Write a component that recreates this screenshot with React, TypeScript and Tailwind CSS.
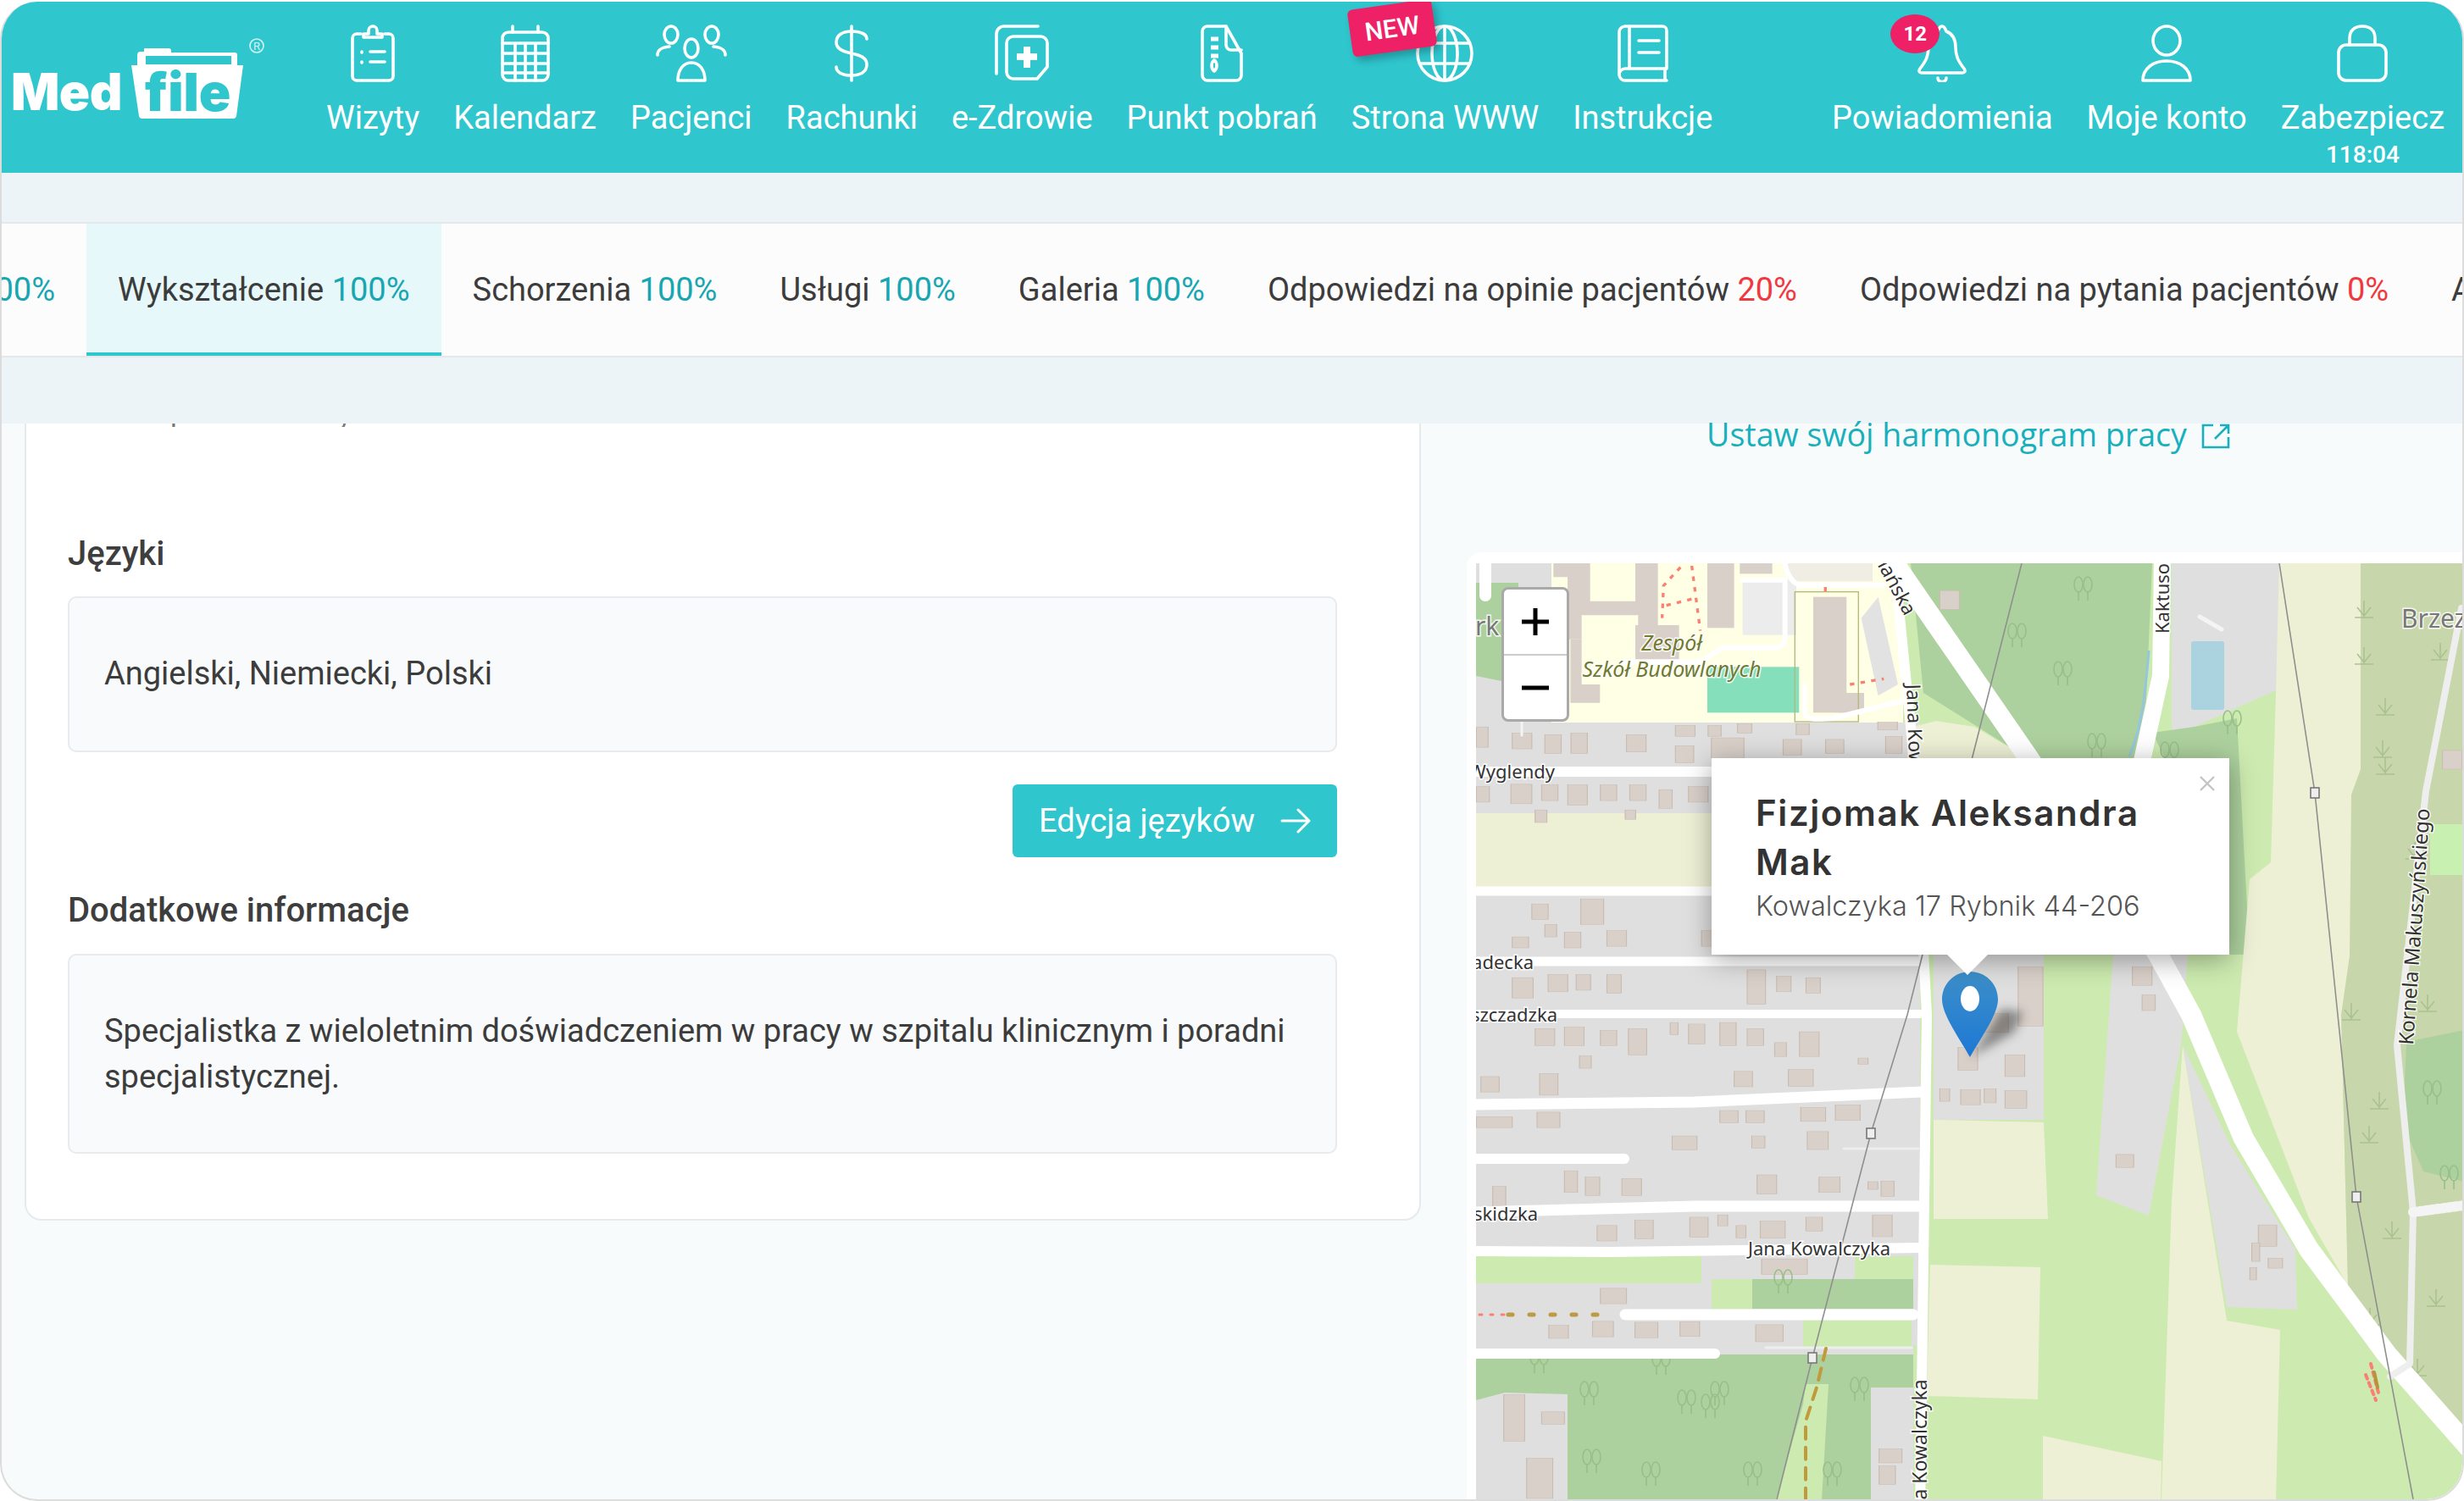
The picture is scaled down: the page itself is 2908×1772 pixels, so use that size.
import { ReactNode } from 'react';

const stroke = { fill: 'none', stroke: '#fff', strokeWidth: 3.6, strokeLinecap: 'round', strokeLinejoin: 'round' } as const;

const Icon = ({ w, children }: { w: number; children: ReactNode }) => (
  <svg width={w} height={68} viewBox={`0 0 ${w} 68`} {...stroke}>
    {children}
  </svg>
);

const navLeft: { label: string; icon: ReactNode; badge?: boolean }[] = [
  {
    label: 'Wizyty',
    icon: (
      <Icon w={52}>
        <path d="M12 11H7a5 5 0 0 0-5 5v45a5 5 0 0 0 5 5h38a5 5 0 0 0 5-5V16a5 5 0 0 0-5-5h-5" />
        <path d="M15 15h22v-4h-6V7a5 5 0 0 0-10 0v4h-6z" />
        <path d="M13 32v1M13 44v1M23 32h17M23 44h17" />
      </Icon>
    ),
  },
  {
    label: 'Kalendarz',
    icon: (
      <Icon w={58}>
        <rect x="2" y="9" width="54" height="57" rx="7" />
        <path d="M14 2v7M44 2v7M2 22h54M2 34h54M2 46h54M2 57h54M17 22v44M29 22v44M41 22v44" />
      </Icon>
    ),
  },
  {
    label: 'Pacjenci',
    icon: (
      <Icon w={84}>
        <ellipse cx="18" cy="12" rx="8" ry="10" />
        <ellipse cx="66" cy="12" rx="8" ry="10" />
        <ellipse cx="42" cy="28" rx="8" ry="11" />
        <path d="M2 36c0-6 4-9 14-10M82 36c0-6-4-9-14-10" />
        <path d="M26 66c0-12 6-21 16-21s16 9 16 21z" />
      </Icon>
    ),
  },
  {
    label: 'Rachunki',
    icon: (
      <Icon w={44}>
        <path d="M22 2v64" />
        <path d="M40 17c0-6-8-9-18-9S4 12 4 21c0 8 8 11 18 13s18 5 18 13c0 9-8 13-18 13S4 57 4 50" />
      </Icon>
    ),
  },
  {
    label: 'e-Zdrowie',
    icon: (
      <Icon w={64}>
        <path d="M2 58V11a9 9 0 0 1 9-9h40" />
        <path d="M22 14h32a8 8 0 0 1 8 8v28l-12 14H22a8 8 0 0 1-8-8V22a8 8 0 0 1 8-8z" />
        <path d="M38 26v25M26 38h24" strokeWidth="8" strokeLinecap="butt" />
      </Icon>
    ),
  },
  {
    label: 'Punkt pobrań',
    icon: (
      <Icon w={50}>
        <path d="M8 2h22l18 32v26a6 6 0 0 1-6 6H8a6 6 0 0 1-6-6V8a6 6 0 0 1 6-6z" />
        <path d="M30 2v22a6 6 0 0 0 6 6h12" />
        <path d="M12 17h9M12 27h9M12 37h9" strokeWidth="5" strokeLinecap="butt" />
        <path d="M16 42c-4 3-4 10 0 13 4-3 4-10 0-13z" />
      </Icon>
    ),
  },
  {
    label: 'Strona WWW',
    badge: true,
    icon: (
      <Icon w={68}>
        <circle cx="34" cy="34" r="32" />
        <ellipse cx="34" cy="34" rx="15" ry="32" />
        <path d="M34 2v64M5 22h58M5 46h58" />
      </Icon>
    ),
  },
  {
    label: 'Instrukcje',
    icon: (
      <Icon w={60}>
        <path d="M9 2h44a5 5 0 0 1 5 5v45H9a7 7 0 0 0-7 7V9a7 7 0 0 1 7-7z" />
        <path d="M2 59a7 7 0 0 0 7 7h49M56 52v14M14 2v50M25 19h24M25 33h24" />
      </Icon>
    ),
  },
];

const Logo = () => (
  <svg width={330} height={150} viewBox="0 0 330 150" className="shrink-0">
    <text x="13" y="128" fill="#fff" fontFamily="Inter, sans-serif" fontWeight="900" fontSize="60" letterSpacing="-0.5">
      Med
    </text>
    <path d="M162 75v-12a4 4 0 0 1 4-4h4v-3a1 1 0 0 1 1-1h28a3 3 0 0 1 3 3v2h75a3 3 0 0 1 3 3v12z" fill="#fff" />
    <rect x="172" y="64" width="101" height="10" fill="#2fc6ce" />
    <path d="M155 75h132l-8 60a4 4 0 0 1-4 3H168a4 4 0 0 1-4-3z" fill="#fff" />
    <text x="171" y="129" fill="#2fc6ce" fontFamily="Inter, sans-serif" fontWeight="900" fontSize="62" letterSpacing="0">
      file
    </text>
    <circle cx="303" cy="52" r="8" fill="none" stroke="#d4f3f5" strokeWidth="1.6" />
    <text x="303" y="57" fill="#d4f3f5" textAnchor="middle" fontFamily="Roboto, sans-serif" fontSize="13">
      R
    </text>
  </svg>
);

const NavItem = ({ label, icon, badge, children }: { label: string; icon: ReactNode; badge?: boolean; children?: ReactNode }) => (
  <div className="relative flex flex-col items-center shrink-0">
    <div className="relative h-[68px] flex justify-center">
      {icon}
      {badge && (
        <div className="absolute left-[-78px] top-[-24px] w-[100px] h-[56px] -rotate-[8deg] rounded-[6px] bg-[#ee2066] text-white text-[30px] font-medium flex items-center justify-center shadow-[4px_6px_10px_rgba(0,0,0,0.25)]">
          NEW
        </div>
      )}
    </div>
    <span className="mt-[19px] text-[38px] leading-[46px] text-white whitespace-nowrap">{label}</span>
    {children}
  </div>
);

const Header = () => (
  <div className="h-[202px] shrink-0 bg-[#2fc6ce] flex items-start pt-[27px] text-white">
    <div className="w-[385px] shrink-0 -mt-[27px] -ml-[2px]">
      <Logo />
    </div>
    <div className="flex gap-[40px]">
      {navLeft.map((n) => (
        <NavItem key={n.label} {...n} />
      ))}
    </div>
    <div className="ml-auto flex gap-[40px] pr-[21px]">
      <NavItem
        label="Powiadomienia"
        icon={
          <div className="relative">
            <Icon w={58}>
              <path d="M29 2c2 0 4 3 5 6 8 3 11 11 11 19 0 10 3 16 10 25 2 3 1 5-2 5H5c-3 0-4-2-2-5 7-9 10-15 10-25 0-8 3-16 11-19 1-3 3-6 5-6z" />
              <path d="M24 63c0 6 10 6 10 0" />
            </Icon>
            <div className="absolute left-[-32px] top-[-12px] w-[58px] h-[46px] rounded-[50%] bg-[#ee2066] text-[24px] font-bold flex items-center justify-center">12</div>
          </div>
        }
      />
      <NavItem
        label="Moje konto"
        icon={
          <Icon w={60}>
            <ellipse cx="30" cy="19" rx="16" ry="17" />
            <path d="M2 66c0-14 12-23 28-23s28 9 28 23z" />
          </Icon>
        }
      />
      <NavItem
        label="Zabezpiecz"
        icon={
          <Icon w={60}>
            <rect x="2" y="24" width="56" height="42" rx="9" />
            <path d="M15 24V16C15 7 21 2 30 2s15 5 15 14v8" />
          </Icon>
        }
      >
        <span className="mt-[5px] text-[28px] leading-[32px] font-medium">118:04</span>
      </NavItem>
    </div>
  </div>
);

const tabs: [string, string, boolean][] = [
  ['Wykształcenie', '100%', true],
  ['Schorzenia', '100%', true],
  ['Usługi', '100%', true],
  ['Galeria', '100%', true],
  ['Odpowiedzi na opinie pacjentów', '20%', false],
  ['Odpowiedzi na pytania pacjentów', '0%', false],
];

const Tabs = () => (
  <div className="h-[160px] shrink-0 border-y-2 border-[#e4e8ea] bg-[#fcfcfc] flex overflow-hidden text-[38px] leading-[46px] text-[#3c3c3c] whitespace-nowrap">
    <div className="w-[100px] shrink-0 flex justify-end pr-[37px] pt-[55px]">
      <span className="text-[#17a6b2]">100%</span>
    </div>
    {tabs.map(([name, pct, ok], i) => (
      <div
        key={name}
        className={
          i === 0
            ? 'shrink-0 px-[37px] pt-[55px] bg-[#e6f8f9] border-b-4 border-[#2fc6ce]'
            : 'shrink-0 px-[37px] pt-[55px]'
        }
      >
        {name} <span className={ok ? 'text-[#17a6b2]' : 'text-[#f0393f]'}>{pct}</span>
      </div>
    ))}
    <div className="shrink-0 pl-[37px] pt-[55px]">Akceptacja</div>
  </div>
);

const LeftCard = () => (
  <div className="ml-[27px] w-[1648px] h-[941px] shrink-0 bg-white border-2 border-t-0 border-[#e6eaec] rounded-b-[20px] pl-[49px] pr-[97px] overflow-hidden">
    <div className="h-[4px] overflow-hidden pl-[46px] relative">
      <div className="absolute top-[-28px] text-[34px] leading-[32px] text-[#777]">Akceptowane karty</div>
    </div>
    <div className="mt-[127px] text-[40px] leading-[46px] font-medium text-[#3e3e3e]">Języki</div>
    <div className="mt-[27px] h-[184px] rounded-[10px] border-2 border-[#e8ebee] bg-[#f9fafb] flex items-center px-[41px] pb-[2px] text-[38px] text-[#3c3c3c]">
      Angielski, Niemiecki, Polski
    </div>
    <div className="mt-[38px] flex justify-end">
      <div className="w-[383px] h-[86px] rounded-[6px] bg-[#2fc6ce] text-white text-[38px] flex items-center justify-center gap-[30px]">
        <span>Edycja języków</span>
        <svg width="36" height="30" viewBox="0 0 36 30" fill="none" stroke="#fff" strokeWidth="3" strokeLinecap="round" strokeLinejoin="round">
          <path d="M2 15h32M21 2l13 13-13 13" />
        </svg>
      </div>
    </div>
    <div className="mt-[40px] text-[40px] leading-[46px] font-medium text-[#3e3e3e]">Dodatkowe informacje</div>
    <div className="mt-[28px] h-[236px] rounded-[10px] border-2 border-[#e8ebee] bg-[#f9fafb] flex items-center px-[41px] text-[38px] leading-[54px] text-[#3c3c3c]">
      Specjalistka z wieloletnim doświadczeniem w pracy w szpitalu klinicznym i poradni specjalistycznej.
    </div>
  </div>
);

// Map shapes are written in the coordinates of the reference crops, each group maps back to page px
const g5 = 'translate(1700 640) scale(0.7704 0.37)';
const g6 = 'translate(1700 1200) scale(0.7704 0.3648)';
const g10 = 'translate(1740 660) scale(0.3333)';

const b5 = [
  [360,590,30,35],[410,590,20,35],[455,585,22,30],[545,585,20,35],[670,580,30,25],
  [55,595,18,65],[110,615,30,50],[160,620,25,60],[200,615,25,65],[285,620,30,55],[360,655,28,55],[415,630,50,65],[525,635,28,50],[590,635,28,45],[682,625,25,55],
  [55,785,20,50],[108,778,32,62],[155,780,25,50],[195,780,30,65],[245,780,25,50],[290,780,25,50],[335,795,20,60],[380,785,30,50],[145,860,18,40],[283,860,16,30],
  [140,1160,25,50],[215,1145,35,80],[160,1225,18,40],[190,1250,25,50],[255,1245,30,50],[110,1265,25,35],[400,1245,18,50],
  [110,1395,32,65],[165,1385,30,55],[208,1385,22,50],[255,1385,22,60],[470,1370,28,110],[515,1390,22,50],[560,1395,22,50],
  [885,1360,38,190],[825,1510,45,60],[1060,1360,30,60],[1075,1450,20,50],[765,160,30,60],[1535,670,30,60],
];
const b6 = [
  [145,45,30,55],[190,40,30,60],[245,50,25,50],[288,45,28,85],[352,25,12,40],[380,30,25,65],[428,25,25,75],[470,45,25,55],[512,90,18,45],[550,55,30,80],[213,133,18,40],[640,140,15,20],[62,200,28,50],[152,190,28,70],[450,183,28,50],[533,177,38,55],
  [55,330,55,35],[148,315,35,50],[428,310,28,40],[468,310,28,40],[552,300,38,45],[605,292,38,50],[355,392,38,45],[477,392,20,40],[562,378,32,58],[190,505,20,70],[222,525,22,60],[278,530,30,55],[485,518,30,62],[580,525,32,50],[655,540,15,25],[675,538,20,50],[80,555,20,65],
  [240,682,30,50],[298,665,28,60],[382,655,28,65],[425,648,15,35],[453,682,15,40],[490,668,38,55],[560,655,25,45],[662,648,30,70],
  [492,790,70,50],[245,885,40,50],[166,1005,30,42],[233,992,32,50],[298,995,35,50],[367,993,30,48],[483,1003,42,55],
  [765,240,15,40],[797,243,30,48],[833,240,18,45],[865,245,33,58],[793,105,30,75],[865,130,30,70],[1035,452,27,42],[1253,680,28,70],[1243,738,12,60],[1268,788,22,32],[1240,818,10,40],
  [97,1230,32,150],[155,1285,35,40],[132,1435,40,130],[672,1405,35,45],[672,1460,25,60],
];
const trees = [
  [2458,700],[2434,800],[2474,885],[2380,755],[2634,858],[2560,895],[2104,1518],[2018,1665],[2029,1650],[1875,1650],[1990,1660],
  [1948,1745],[1878,1730],[2068,1745],[2162,1745],[2194,1645],[2870,1295],[2890,1395],[1816,1612],[1960,1614],
];
const marks = [
  [2790,725],[2880,775],[2790,780],[2815,840],[2812,890],[2815,910],[2775,1200],[2850,1010],[2808,1305],[2796,1345],[2823,1458],[2875,1538],[2797,1560],[2853,1620],[2865,1190],
];

const Road = ({ d, w = 12, c = '#fff', dash }: { d: string; w?: number; c?: string; dash?: string }) => (
  <path d={d} fill="none" stroke={c} strokeWidth={w} strokeLinecap="round" strokeLinejoin="round" strokeDasharray={dash} />
);

const Label = ({ x, y, rot, size = 22, c = '#333', anchor = 'start', italic, children }: { x: number; y: number; rot?: number; size?: number; c?: string; anchor?: 'start' | 'middle' | 'end'; italic?: boolean; children: string }) => (
  <text
    x={x}
    y={y}
    transform={rot ? `rotate(${rot} ${x} ${y})` : undefined}
    fontFamily="'Noto Sans', sans-serif"
    fontStyle={italic ? 'italic' : 'normal'}
    fontSize={size}
    fill={c}
    textAnchor={anchor}
    stroke="#fff"
    strokeOpacity={0.85}
    strokeWidth={3}
    paintOrder="stroke"
  >
    {children}
  </text>
);

const MapDrawing = () => (
  <svg viewBox="1742 667 1166 1105" width="1166" height="1105" className="block">
    <rect x="1742" y="667" width="1166" height="1105" fill="#cdebb0" />
    {/* land use, page px */}
    <rect x="1742" y="667" width="90" height="190" fill="#e0dfdf" />
    <path d="M1742 690h50v120l-50-10z" fill="#add19e" />
    <rect x="1742" y="855" width="524" height="746" fill="#e0dfdf" />
    <rect x="1831" y="667" width="415" height="188" fill="#ffffe5" />
    <rect x="1742" y="962" width="290" height="92" fill="#eef0d5" />
    <path d="M2255 667L2540 667 2530 897 2393 897 2270 820z" fill="#add19e" />
    <path d="M2258 860L2285 853 2330 860 2393 897 2266 897z" fill="#eef0d5" />
    <path d="M2563 667H2690V815L2590 860 2563 870z" fill="#e0dfdf" />
    <rect x="2586" y="759" width="39" height="81" rx="3" fill="#aad3df" />
    <path d="M2540 867L2590 860 2640 850 2655 1129 2600 1129 2555 897z" fill="#add19e" />
    <path d="M2690 667H2786V1130L2763 1200 2771 1520 2725 1440 2640 1220 2655 1040 2680 1020 2686 820z" fill="#eef0d5" />
    <path d="M2786 667H2908V1715L2800 1590 2771 1520 2763 1200 2773 1130 2775 940 2786 910z" fill="#c8d7ab" />
    <path d="M2775 667H2786V910L2775 915z" fill="#eef0d5" />
    <path d="M2840 1232L2908 1218V1397L2860 1385 2836 1330z" fill="#add19e" />
    <rect x="2868" y="975" width="40" height="60" fill="#c8f0b0" />
    <rect x="2282" y="1129" width="130" height="195" fill="#e0dfdf" />
    <path d="M2282 1324L2412 1327 2417 1441H2282z" fill="#eef0d5" />
    <path d="M2278 1495L2408 1498 2405 1654 2274 1650z" fill="#eef0d5" />
    <path d="M2411 1697L2551 1727 2550 1772H2411z" fill="#eef0d5" />
    <path d="M2576 1236L2628 1561 2691 1572 2686 1772H2551L2563 1419z" fill="#eef0d5" />
    <path d="M2494 1129H2582L2574 1236 2536 1437 2474 1413z" fill="#e0dfdf" />
    <path d="M2576 1236L2632 1353 2709 1477 2711 1548 2628 1545z" fill="#e0dfdf" />
    <rect x="1742" y="1485" width="266" height="32" fill="#cdebb0" />
    <rect x="2189" y="1485" width="69" height="28" fill="#cdebb0" />
    <rect x="2020" y="1512" width="48" height="35" fill="#cdebb0" />
    <rect x="2068" y="1512" width="190" height="35" fill="#add19e" />
    <rect x="2128" y="1561" width="128" height="33" fill="#cdebb0" />
    <path d="M1742 1601H2258V1772H1742z" fill="#add19e" />
    <path d="M2128 1660L2131 1636H2158L2150 1772H2096z" fill="#cdebb0" />
    <path d="M1742 1655L1776 1646 1850 1648V1772H1742z" fill="#e0dfdf" />
    <rect x="2208" y="1640" width="50" height="132" fill="#e0dfdf" />
    <rect x="2258" y="1590" width="10" height="182" fill="#cdebb0" />

    {/* school buildings */}
    <g transform={g10}>
      <path d="M280 20H410V155H570V20H650V240H725V365H570V240H580V205H380V290H330V70H280z" fill="#d9d0c9" />
      <path d="M380 450H445V515H340V290H380z" fill="#d9d0c9" />
      <rect x="825" y="20" width="95" height="230" fill="#d9d0c9" />
      <rect x="940" y="20" width="115" height="38" fill="#d9d0c9" />
      <rect x="1200" y="140" width="118" height="410" fill="#d9d0c9" />
      <rect x="1290" y="480" width="90" height="70" fill="#d9d0c9" />
      <rect x="825" y="388" width="325" height="162" fill="#86dfbb" />
      <rect x="950" y="80" width="190" height="195" fill="#ececec" />
      <path d="M1370 215L1430 140 1500 450 1430 490z" fill="#e2e2e2" />
      <rect x="1110" y="20" width="300" height="65" fill="#f0ede4" />
      <rect x="1135" y="122" width="225" height="460" fill="none" stroke="#b5b77d" strokeWidth="4" />
      <path d="M1100 20c5 40 30 78 60 78h290M950 80h150v200c0 30-20 40-40 40H880l-80 50H520M1170 455v90c0 30 30 30 100 25l240-60" fill="none" stroke="#fff" strokeWidth="18" strokeLinecap="round" />
      <path d="M730 35L670 100 665 215M770 30L800 260M680 170L780 145M1330 450L1450 430M1243 105V125" fill="none" stroke="#f98072" strokeWidth="10" strokeDasharray="16 22" />
    </g>
    <g transform={g5}>
      {b5.map(([x, y, w, h], i) => (
        <rect key={i} x={x} y={y} width={w} height={h} fill="#d9d0c9" stroke="#c9bcb1" strokeWidth="1.5" />
      ))}
    </g>
    <g transform={g6}>
      {b6.map(([x, y, w, h], i) => (
        <rect key={i} x={x} y={y} width={w} height={h} fill="#d9d0c9" stroke="#c9bcb1" strokeWidth="1.5" />
      ))}
    </g>

    {/* trees, scrub */}
    {trees.map(([x, y], i) => (
      <g key={i} fill="none" stroke="#98bf88" strokeWidth="1.6">
        <ellipse cx={x - 5} cy={y - 8} rx="5" ry="9" />
        <ellipse cx={x + 6} cy={y - 8} rx="5" ry="9" />
        <path d={`M${x - 5} ${y}v11M${x + 6} ${y}v11`} />
      </g>
    ))}
    {marks.map(([x, y], i) => (
      <path key={i} d={`M${x} ${y - 14}v20M${x - 8} ${y - 6}l8 10 8-10M${x - 11} ${y + 6}h22`} fill="none" stroke="#aac28f" strokeWidth="1.6" />
    ))}

    {/* roads */}
    <Road d="M2224 650L2393 895 2547 1129 2586 1200 2648 1346 2725 1477 2817 1601 2915 1712" w={24} />
    <Road d="M2552 660L2550 800 2528 900" w={20} />
    <path d="M2536 770C2532 820 2528 860 2513 895" fill="none" stroke="#94c6dc" strokeWidth="3" />
    <Road d="M2238 690L2257 880 2274 1200 2266 1790" w={12} />
    <Road d="M1742 913H2030" />
    <Road d="M1742 1054H2030" w={11} />
    <Road d="M1742 1137H2268" w={11} />
    <Road d="M1742 1199H2268" w={10} />
    <Road d="M1742 1306L2000 1303 2268 1291" w={13} />
    <Road d="M1742 1370H1917" w={12} />
    <Road d="M1742 1433L2000 1426 2268 1426" w={13} />
    <Road d="M1742 1479L1900 1480 2268 1475" w={12} />
    <Road d="M1918 1554H2258" w={13} />
    <Road d="M1742 1600H2024" w={12} />
    <Road d="M2084 1593H2256" w={3} c="#eee" />
    <Road d="M2176 1358H2264" w={3} c="#eee" />
    <Road d="M1796 750V870" w={3} c="#f4f4f4" />
    <Road d="M1753 667V705" w={14} />
    <Road d="M2596 730L2622 745" w={5} c="#f4f4f4" />
    <Road d="M2905 720L2863 936 2829 1236 2848 1433 2844 1612 2821 1627" w={8} c="#eeeeee" />
    <Road d="M2848 1433L2908 1425" w={12} c="#f4f4f4" dash="3 4" />
    <Road d="M1780 1554H1900" w={5} c="#bd9a45" dash="5 20" />
    <Road d="M1746 1554H1780" w={3} c="#f98072" dash="3 10" />
    <Road d="M2155 1594L2144 1640 2131 1680V1772" w={4} c="#c09a3c" dash="14 10" />
    <Road d="M2798 1612L2808 1650M2792 1625L2804 1655" w={4} c="#f98072" dash="5 5" />
    <Road d="M2802 1622L2806 1640" w={4} c="#b8923c" />

    {/* power lines */}
    <path d="M2386 667L2328 895 2251 1200 2208 1340 2139 1605 2097 1772" fill="none" stroke="#8f8f8f" strokeWidth="1.6" />
    <path d="M2690 667L2732 938 2759 1200 2781 1415 2848 1772" fill="none" stroke="#8f8f8f" strokeWidth="1.6" />
    {[[2208, 1340], [2139, 1605], [2732, 938], [2781, 1415]].map(([x, y]) => (
      <rect key={x} x={x - 5} y={y - 6} width="10" height="12" fill="#eee" stroke="#777" strokeWidth="1.6" />
    ))}

    {/* labels */}
    <Label x={1973} y={770} anchor="middle" size={25} c="#707a30" italic>Zespół</Label>
    <Label x={1973} y={801} anchor="middle" size={25} c="#707a30" italic>Szkół Budowlanych</Label>
    <Label x={1835} y={921} anchor="end">Wyglendy</Label>
    <Label x={1810} y={1146} anchor="end">Radecka</Label>
    <Label x={1838} y={1208} anchor="end">Bieszczadzka</Label>
    <Label x={1815} y={1443} anchor="end">Beskidzka</Label>
    <Label x={2063} y={1484} size={22}>Jana Kowalczyka</Label>
    <Label x={2274} y={1806} rot={-90} size={23}>Jana Kowalczyka</Label>
    <Label x={2250} y={810} rot={88} size={23}>Jana Kowalczyka</Label>
    <Label x={2560} y={750} rot={-90} size={22}>Kaktusowa</Label>
    <Label x={2178} y={598} rot={62} size={23}>Krakowiańska</Label>
    <Label x={2848} y={1236} rot={-86} size={24}>Kornela Makuszyńskiego</Label>
    <Label x={2834} y={743} size={30} c="#777">Brzezie</Label>
    <Label x={1706} y={752} size={30} c="#777">Park</Label>
  </svg>
);

const Pin = () => (
  <svg width="110" height="112" viewBox="0 0 110 112" className="absolute left-[561px] top-[495px]">
    <defs>
      <linearGradient id="pin" x1="0" y1="0" x2="0" y2="1">
        <stop offset="0" stopColor="#3d8fc9" />
        <stop offset="1" stopColor="#1d78d4" />
      </linearGradient>
      <filter id="pinShadow" x="-50%" y="-50%" width="200%" height="200%">
        <feGaussianBlur stdDeviation="6" />
      </filter>
    </defs>
    <path d="M34 101L85 72 96 48 70 44z" fill="#333" opacity="0.5" filter="url(#pinShadow)" />
    <path d="M33 0C15 0 0 14 0 33c0 18 22 48 33 68 11-20 33-50 33-68C66 14 51 0 33 0z" fill="url(#pin)" />
    <ellipse cx="33" cy="32" rx="11" ry="15" fill="#fff" />
  </svg>
);

const MapCard = () => (
  <div className="relative flex-1 bg-white rounded-tl-[18px] pl-[11px] pt-[13px] overflow-hidden">
    <MapDrawing />
    <div className="absolute left-[41px] top-[41px] w-[80px] h-[159px] rounded-[8px] border-[3px] border-[#a9a9a9] bg-white flex flex-col text-black">
      <div className="h-[78px] border-b-2 border-[#ccc] flex items-center justify-center">
        <svg width="36" height="36" viewBox="0 0 36 36"><path d="M18 2v32M2 18h32" stroke="#000" strokeWidth="5" /></svg>
      </div>
      <div className="flex-1 flex items-center justify-center">
        <svg width="36" height="6" viewBox="0 0 36 6"><path d="M2 3h32" stroke="#000" strokeWidth="5" /></svg>
      </div>
    </div>
    <Pin />
    <div className="absolute left-[289px] top-[243px] w-[611px] h-[232px] bg-white pl-[52px] pt-[36px] shadow-[0_6px_30px_rgba(0,0,0,0.35)]">
      <div className="text-[42px] leading-[58px] font-semibold text-[#333] tracking-[1.6px] font-['Inter',sans-serif]">
        Fizjomak Aleksandra<br />Mak
      </div>
      <div className="mt-[3px] text-[32.5px] leading-[40px] font-light text-[#555] font-['Inter',sans-serif]">Kowalczyka 17 Rybnik 44-206</div>
      <svg width="20" height="20" viewBox="0 0 20 20" className="absolute right-[16px] top-[20px]">
        <path d="M2 2l16 16M18 2L2 18" stroke="#c4c4c4" strokeWidth="2.4" />
      </svg>
      <div className="absolute left-[278px] top-[232px] w-0 h-0 border-x-[24px] border-x-transparent border-t-[24px] border-t-white" />
    </div>
  </div>
);

export default function App() {
  return (
    <div className="w-[2908px] h-[1772px] bg-white overflow-hidden font-['Roboto',sans-serif]">
      <div className="h-[1770px] mt-[2px] rounded-[44px] border-x-2 border-b-2 border-[#dcdcdc] overflow-hidden bg-[#f8fbfc] flex flex-col">
        <Header />
        <div className="h-[58px] shrink-0 bg-[#ecf4f7]" />
        <Tabs />
        <div className="h-[78px] shrink-0 bg-[#ecf4f7]" />
        <div className="flex-1 flex min-h-0">
          <div className="w-[1729px] shrink-0">
            <LeftCard />
          </div>
          <div className="flex-1 flex flex-col min-w-0">
            <div className="h-[152px] shrink-0 pl-[283px] flex items-start gap-[17px] text-[37.6px] leading-[26px] text-[#17b0bc] font-['Open_Sans',sans-serif]">
              <span>Ustaw swój harmonogram pracy</span>
              <svg width="34" height="30" viewBox="0 0 34 30" fill="none" stroke="#17b0bc" strokeWidth="2.6" className="shrink-0">
                <path d="M14 2H2v26h30V16M16 18L32 2M22 2h10v10" />
              </svg>
            </div>
            <MapCard />
          </div>
        </div>
      </div>
    </div>
  );
}
